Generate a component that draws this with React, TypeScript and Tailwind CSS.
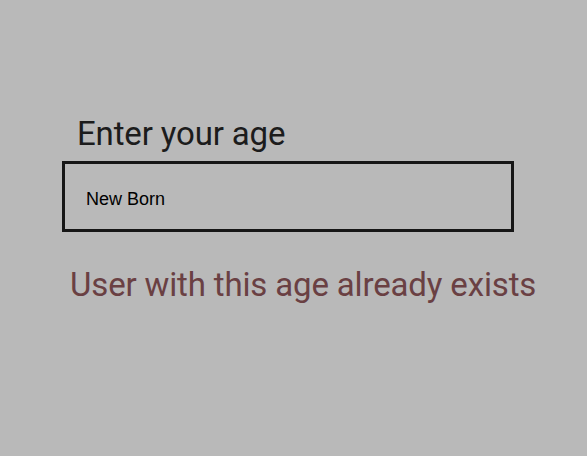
export default function App() {
  return (
    <div className="w-[587px] h-[456px] bg-[#b9b9b9] overflow-hidden font-['Roboto',sans-serif]">
      <div className="pt-[113px] pl-[62px] w-[514px]">
        <label className="block pl-[15px] text-[33px] leading-[42px] text-[#1c1c1c] tracking-[-0.15px]">
          Enter your age
        </label>
        <div className="mt-[6px] h-[71px] border-[3px] border-[#161616] flex items-center pl-[21px] pt-[6px]">
          <span className="font-['Liberation_Sans',Arial,sans-serif] text-[18px] text-black">New Born</span>
        </div>
      </div>
      <p className="mt-[33px] pl-[70px] text-[33px] leading-[40px] text-[#6a4043] tracking-[-0.15px] whitespace-nowrap">
        User with this age already exists
      </p>
    </div>
  )
}
